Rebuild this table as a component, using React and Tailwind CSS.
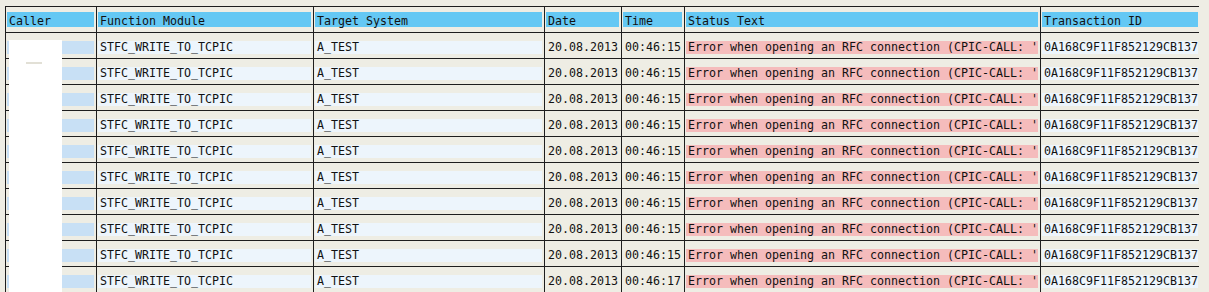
import React from 'react'

// Spalten der Liste (SAP ALV-Stil)
const COLS = [
  { key: 'caller', label: 'Caller', w: 'w-[91px]', band: 'bg-[#c8e0f5]' },
  { key: 'fm', label: 'Function Module', w: 'w-[217px]', band: 'bg-[#edf5fc]' },
  { key: 'target', label: 'Target System', w: 'w-[231px]', band: 'bg-[#edf5fc]' },
  { key: 'date', label: 'Date', w: 'w-[77px]', band: '' },
  { key: 'time', label: 'Time', w: 'w-[63px]', band: '' },
  { key: 'status', label: 'Status Text', w: 'w-[356px]', band: 'bg-[#f5bcbc]' },
  { key: 'tid', label: 'Transaction ID', w: 'w-[159px]', band: 'bg-[#edf5fc]', last: true },
]

const STATUS = "Error when opening an RFC connection (CPIC-CALL: '"

const ROWS = Array.from({ length: 10 }, (_, i) => ({
  caller: '',
  fm: 'STFC_WRITE_TO_TCPIC',
  target: 'A_TEST',
  date: '20.08.2013',
  time: i === 9 ? '00:46:17' : '00:46:15',
  status: STATUS,
  tid: '0A168C9F11F852129CB137',
}))

const MONO = "font-['DejaVu_Sans_Mono','Liberation_Mono',monospace] text-[11.63px] text-[#111]"

function Cell({ col, children, header }) {
  return (
    <div
      className={`${col.w} h-full shrink-0 border-l border-[#1e1e1e] pl-[1px] ${col.last ? 'pr-[1px]' : 'pr-[2px]'} ${header ? 'pt-[5px]' : 'pt-[8px]'}`}
    >
      <div
        className={
          header
            ? 'h-[15px] pt-[3px] leading-[12px] bg-[#64c8f4] pl-[2px] whitespace-nowrap'
            : `h-[13px] leading-[13px] ${col.band} pl-[2px] overflow-hidden whitespace-nowrap`
        }
      >
        {children}
      </div>
    </div>
  )
}

export default function App() {
  return (
    <div className={`w-[1209px] h-[292px] bg-[#eeede4] overflow-hidden pl-[5px] pt-[6px] ${MONO}`}>
      <div className="relative w-[1194px]">
        {/* Kopfzeile */}
        <div className="flex h-[26px] border-t border-[#1e1e1e]">
          {COLS.map((c) => (
            <Cell key={c.key} col={c} header>
              {c.label}
            </Cell>
          ))}
        </div>

        {/* Datenzeilen */}
        {ROWS.map((r, i) => (
          <div key={i} className="flex h-[26px] border-t border-[#1e1e1e]">
            {COLS.map((c) => (
              <Cell key={c.key} col={c}>
                {r[c.key]}
              </Cell>
            ))}
          </div>
        ))}

        {/* geschwärzter Bereich (Caller) liegt über der Spalte */}
        <div className="absolute left-[4px] top-[34px] w-[53px] h-[252px] bg-white">
          <div className="ml-[17px] mt-[22px] w-[16px] h-[2px] bg-[#e2e0d6]" />
        </div>
      </div>
    </div>
  )
}
